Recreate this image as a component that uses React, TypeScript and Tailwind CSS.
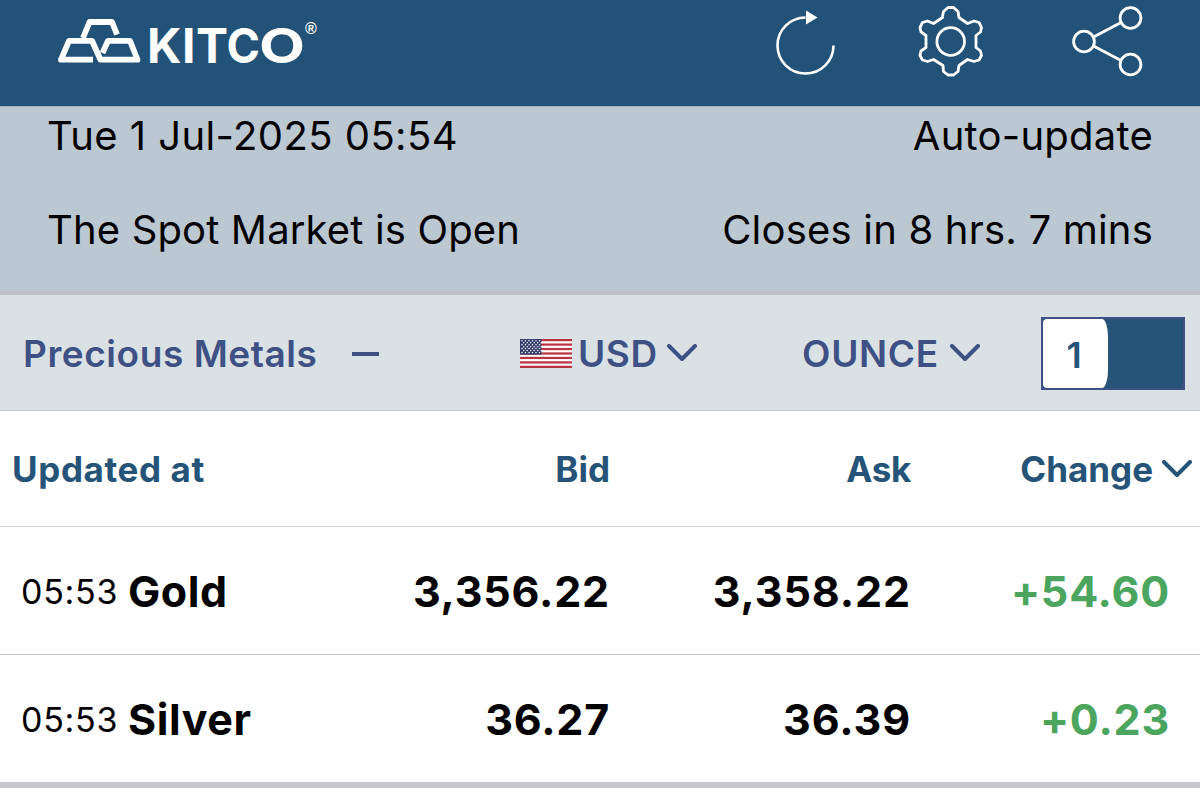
type Quote = {
  time: string;
  name: string;
  bid: string;
  ask: string;
  change: string;
};

const quotes: Quote[] = [
  { time: "05:53", name: "Gold", bid: "3,356.22", ask: "3,358.22", change: "+54.60" },
  { time: "05:53", name: "Silver", bid: "36.27", ask: "36.39", change: "+0.23" },
];

function Logo() {
  return (
    <svg width="270" height="90" viewBox="50 0 270 90" className="block" fill="none">
      {/* Stacked bars */}
      <g stroke="#fff" strokeWidth="5.8" strokeLinejoin="round">
        <path d="M83 38 L89.5 22 H112 L117 34.5" />
        <path d="M93 59.7 H61 L69 40.8 H92 L100.5 59.7 H137.5 L130 40.8 H108 L102.5 53" />
      </g>
      <text
        x="147 182 196"
        y="62.5"
        fill="#fff"
        className="font-['Inter',sans-serif] text-[48px] font-bold"
      >
        KIT
        <tspan x="226.5" textLength="33.5" lengthAdjust="spacingAndGlyphs">
          C
        </tspan>
        <tspan x="259" textLength="46" lengthAdjust="spacingAndGlyphs">
          O
        </tspan>
      </text>
      <text x="305" y="34" fill="#fff" className="font-['Liberation_Sans',sans-serif] text-[16px] font-bold">
        ®
      </text>
    </svg>
  );
}

function RefreshIcon() {
  return (
    <svg width="62" height="68" viewBox="775 9 62 68" className="block" fill="none">
      <path d="M833.5 45.5 A28 28 0 1 1 805.5 17.5" stroke="#fff" strokeWidth="2.6" />
      <path d="M806 10.5 L817.5 17.5 L806 24.5 Z" fill="#fff" />
    </svg>
  );
}

function GearIcon() {
  const tooth = "M942.5 16.5 L943.5 11.5 L948 7.5 H953.5 L958 11.5 L959 17.5";
  return (
    <svg width="68" height="74" viewBox="917 4 68 74" className="block" fill="none">
      <g stroke="#fff" strokeWidth="2.8" strokeLinejoin="round">
        <path
          d={
            tooth +
            " L967.5 23.5 L974 21 L979 22.5 L981.5 27.5 L980.5 32 L976 35.5 V47.5 L980.5 51 L981.5 55.5 L979 60 L974 61.5 L967.5 59.5 L959 65.5 L958 71.5 L953.5 75 H948 L943.5 71.5 L943 65.5 L933.5 59.5 L927.5 61.5 L922.5 60 L920 55.5 L921 51 L926 47.5 V35.5 L921 32 L920 27.5 L922.5 22.5 L927.5 21 L933.5 23.5 L942.5 17.5 Z"
          }
        />
        <circle cx="950.7" cy="41.5" r="13.8" />
      </g>
    </svg>
  );
}

function ShareIcon() {
  return (
    <svg width="72" height="74" viewBox="1072 4 72 74" className="block" fill="none">
      <g stroke="#fff" strokeWidth="2.8">
        <circle cx="1084" cy="41.5" r="10.4" />
        <circle cx="1130.5" cy="18" r="10.4" />
        <circle cx="1130.5" cy="64.5" r="10.4" />
        <path d="M1093.5 37 L1121 22.5 M1093.5 46 L1121 60.5" />
      </g>
    </svg>
  );
}

function Chevron() {
  return (
    <svg width="32" height="20" viewBox="0 0 32 20" className="block" fill="none">
      <path
        d="M3 2 L16 15 L29 2"
        stroke="currentColor"
        strokeWidth="4"
        strokeLinecap="round"
        strokeLinejoin="round"
      />
    </svg>
  );
}

function UsFlag() {
  const stars = [];
  for (let row = 0; row < 7; row++) {
    for (let col = 0; col < 6; col++) {
      stars.push(
        <circle key={row + "-" + col} cx={2 + col * 3.5 + (row % 2) * 1.7} cy={1.8 + row * 1.95} r="0.75" fill="#fff" />
      );
    }
  }
  return (
    <svg width="52" height="29" viewBox="0 0 52 29" className="block">
      <rect width="52" height="29" fill="#fff" />
      {[0, 1, 2, 3, 4, 5, 6].map((i) => (
        <rect key={i} y={i * 4.46} width="52" height="2.23" fill="#b83440" />
      ))}
      <rect width="21.5" height="15.6" fill="#343d70" />
      {stars}
    </svg>
  );
}

export default function App() {
  return (
    <div className="flex h-[792px] w-[1200px] flex-col overflow-hidden bg-white font-['Inter',sans-serif] whitespace-nowrap text-black">
      {/* App bar */}
      <header className="flex h-[106px] shrink-0 bg-[#225278]">
        <div className="pl-[50px]">
          <Logo />
        </div>
        <div className="ml-auto flex pr-[56px]">
          <div className="mr-[80px] pt-[9px]">
            <RefreshIcon />
          </div>
          <div className="mr-[87px] pt-[4px]">
            <GearIcon />
          </div>
          <div className="pt-[4px]">
            <ShareIcon />
          </div>
        </div>
      </header>

      {/* Market status */}
      <section className="flex h-[189px] shrink-0 flex-col border-t border-b-4 border-t-[#a3b3bd] border-b-[#c0c0ca] bg-[#bbc8d1] pr-[47px] pl-[47px] text-[40px] leading-[58px]">
        <div className="flex justify-between">
          <span className="tracking-[0.42px]">Tue 1 Jul-2025 05:54</span>
          <span className="tracking-[0.25px]">Auto-update</span>
        </div>
        <div className="mt-[36px] flex justify-between">
          <span className="tracking-[0.15px]">The Spot Market is Open</span>
          <span className="tracking-[0.2px]">Closes in 8 hrs. 7 mins</span>
        </div>
      </section>

      {/* Controls */}
      <section className="flex h-[116px] shrink-0 items-center border-b border-[#c6c7cd] bg-[#dae1e5] pt-[2px] text-[37px] font-semibold text-[#3f5184]">
        <div className="flex w-[520px] items-center pl-[23px]">
          <span className="w-[329px] tracking-[0.55px]">Precious Metals</span>
          <span className="h-[4px] w-[27px] bg-[#3f5184]" />
        </div>
        <div className="flex w-[282px] items-center">
          <UsFlag />
          <span className="ml-[6px] w-[88px] tracking-[0.6px]">USD</span>
          <Chevron />
        </div>
        <div className="flex w-[239px] items-center">
          <span className="w-[147px] tracking-[0.7px]">OUNCE</span>
          <Chevron />
        </div>
        <div className="flex h-[73px] w-[144px] border-2 border-[#3f5184] bg-[#265478]">
          <div className="flex w-[65px] items-center justify-center rounded-[4px_6px_6px_4px_/_4px_18px_18px_4px] bg-white pt-[3px] pr-[3px] text-[36px] text-[#265478]">
            1
          </div>
        </div>
      </section>

      {/* Column titles */}
      <div className="grid h-[116px] shrink-0 grid-cols-[310px_300px_301px_289px] items-center border-b border-[#d6d6d8] pt-[2px] text-[35px] font-bold text-[#265478]">
        <span className="pl-[12px] tracking-[0.6px]">Updated at</span>
        <span className="text-right">Bid</span>
        <span className="text-right tracking-[-0.3px]">Ask</span>
        <span className="flex items-center justify-end pr-[7px]">
          <span className="mr-[8px]">Change</span>
          <Chevron />
        </span>
      </div>

      {/* Quotes */}
      {quotes.map((q) => (
        <div
          key={q.name}
          className="grid h-[128px] shrink-0 grid-cols-[310px_301px_301px_288px] items-center border-b border-[#c6c7cd] pt-[2px] text-[43px] font-bold tracking-[0.8px] last:h-[133px] last:border-b-[6px]"
        >
          <span className="flex items-center pl-[21px]">
            <span className="w-[107px] text-[34px] font-normal tracking-[0.7px]">{q.time}</span>
            <span className="tracking-[0.6px]">{q.name}</span>
          </span>
          <span className="pr-px text-right">{q.bid}</span>
          <span className="pr-px text-right tracking-[0.9px]">{q.ask}</span>
          <span className="pr-[30px] text-right text-[#4ba55f]">{q.change}</span>
        </div>
      ))}
    </div>
  );
}
